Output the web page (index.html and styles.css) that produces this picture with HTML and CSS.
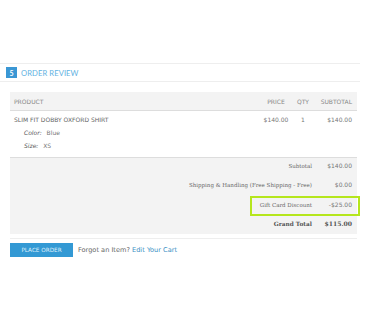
FILE: index.html
```html
<!DOCTYPE html>
<html>
<head>
<meta charset="utf-8">
<link rel="stylesheet" href="styles.css">
</head>
<body>
<div class="review">
  <div class="step-head">
    <span class="badge">5</span>
    <span class="step-title">ORDER REVIEW</span>
  </div>
  <div class="order">
    <div class="thead">
      <div class="c-prod">PRODUCT</div>
      <div class="c-price">PRICE</div>
      <div class="c-qty">QTY</div>
      <div class="c-sub">SUBTOTAL</div>
    </div>
    <div class="trow">
      <div class="c-prod">
        <div class="pname">SLIM FIT DOBBY OXFORD SHIRT</div>
        <div class="opt"><span class="opt-l">Color:</span> Blue</div>
        <div class="opt"><span class="opt-l">Size:</span> XS</div>
      </div>
      <div class="c-price">$140.00</div>
      <div class="c-qty">1</div>
      <div class="c-sub">$140.00</div>
    </div>
    <div class="tfoot">
      <div class="frow"><div class="f-label">Subtotal</div><div class="f-val">$140.00</div></div>
      <div class="frow"><div class="f-label">Shipping &amp; Handling (Free Shipping - Free)</div><div class="f-val">$0.00</div></div>
      <div class="frow"><div class="f-label">Gift Card Discount</div><div class="f-val">-$25.00</div></div>
      <div class="frow grand"><div class="f-label">Grand Total</div><div class="f-val">$115.00</div></div>
      <div class="highlight"></div>
    </div>
    <div class="sep"></div>
    <div class="actions">
      <button class="place">PLACE ORDER</button>
      <span class="forgot">Forgot an Item? <a class="edit" href="#">Edit Your Cart</a></span>
    </div>
  </div>
</div>
</body>
</html>
```
FILE: styles.css
```css
html, body {
  margin: 0;
  padding: 0;
  background: #fff;
}
body {
  font-family: "DejaVu Sans", Verdana, sans-serif;
  font-size: 6px;
  color: #666;
}
.review {
  margin-top: 63px;
  width: 360px;
}
.step-head {
  border-top: 1px solid #eee;
  border-bottom: 1px solid #eee;
  height: 17px;
  display: flex;
  align-items: center;
  padding-left: 6px;
  gap: 4px;
}
.badge {
  width: 11px;
  height: 11px;
  background: #3a97d4;
  color: #fff;
  font-family: Lato, sans-serif;
  font-size: 7px;
  font-weight: bold;
  display: flex;
  align-items: center;
  justify-content: center;
}
.step-title {
  font-family: Lato, sans-serif;
  font-size: 7.6px;
  color: #62b2e2;
  letter-spacing: 0.1px;
}
.order {
  margin: 10px 0 0 10px;
  width: 347px;
}
.thead, .trow {
  display: grid;
  grid-template-columns: 248px 36px 18px 45px;
}
.thead {
  height: 18px;
  background: #f3f3f3;
  border-bottom: 1px solid #ddd;
  align-items: center;
  color: #888;
}
.c-prod { padding-left: 4px; }
.c-price, .c-qty { text-align: center; }
.c-sub { text-align: right; padding-right: 5px; }
.trow {
  height: 46px;
  box-sizing: border-box;
  padding-top: 2px;
  line-height: 13px;
  color: #777;
}
.pname { color: #666; }
.opt { padding-left: 10px; color: #777; }
.opt-l { font-style: italic; color: #555; margin-right: 3px; }
.tfoot {
  position: relative;
  border-top: 1px solid #ddd;
  background: #f3f3f3;
  height: 77px;
  box-sizing: border-box;
  padding-top: 2px;
  display: flex;
  flex-direction: column;
  gap: 7.33px;
}
.frow {
  display: grid;
  grid-template-columns: 307px 40px;
  height: 12px;
  line-height: 12px;
}
.f-label {
  font-family: "DejaVu Serif", Georgia, serif;
  font-size: 5.5px;
  text-align: right;
  padding-right: 5px;
  color: #666;
}
.f-val {
  text-align: right;
  padding-right: 5px;
  color: #777;
}
.grand .f-label, .grand .f-val {
  font-family: "DejaVu Serif", Georgia, serif;
  font-weight: bold;
  color: #555;
}
.grand .f-label { font-size: 5.8px; }
.grand .f-val { font-size: 6.1px; }
.highlight {
  position: absolute;
  left: 240px;
  top: 38px;
  width: 110px;
  height: 20px;
  box-sizing: border-box;
  border: 2px solid #b5e61d;
}
.sep {
  margin-top: 4px;
  border-top: 1px solid #eee;
}
.actions {
  margin-top: 4px;
  display: flex;
  align-items: center;
  gap: 5px;
}
.place {
  width: 63px;
  height: 14px;
  border: none;
  padding: 0;
  background: #3399d4;
  color: #dff0fb;
  font-family: "DejaVu Sans", sans-serif;
  font-size: 5.7px;
}
.forgot {
  font-size: 6.6px;
  color: #666;
}
.edit {
  color: #3a8fc4;
  text-decoration: none;
}
```
